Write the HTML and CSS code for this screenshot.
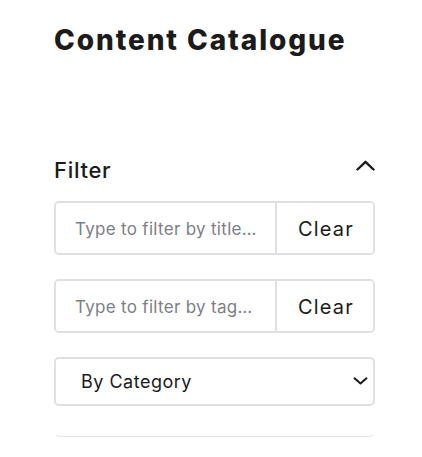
FILE: index.html
```html
<!DOCTYPE html>
<html lang="en">
<head>
<meta charset="utf-8">
<title>Content Catalogue</title>
<link rel="stylesheet" href="styles.css">
</head>
<body>
<main class="page">
  <h1 class="title">Content Catalogue</h1>
  <section class="filter">
    <div class="filter-head">
      <h2 class="filter-title">Filter</h2>
      <button class="toggle" type="button" aria-label="Collapse filter">
        <svg width="19" height="11" viewBox="0 0 19 11"><path d="M1.5 9.5 L9.5 1.8 L17.5 9.5" fill="none" stroke="#1b1b1b" stroke-width="2.4" stroke-linecap="round" stroke-linejoin="round"/></svg>
      </button>
    </div>
    <div class="group">
      <input class="field" type="text" placeholder="Type to filter by title or description">
      <button class="clear" type="button">Clear</button>
    </div>
    <div class="group">
      <input class="field" type="text" placeholder="Type to filter by tags or keywords">
      <button class="clear" type="button">Clear</button>
    </div>
    <div class="select-wrap">
      <select class="select">
        <option>By Category</option>
      </select>
      <svg class="select-arrow" width="15" height="8" viewBox="0 0 15 8"><path d="M1.5 1.3 L7.5 6.5 L13.5 1.3" fill="none" stroke="#1b1b1b" stroke-width="2" stroke-linecap="round" stroke-linejoin="round"/></svg>
    </div>
    <div class="list-edge"></div>
  </section>
</main>
</body>
</html>
```

FILE: styles.css
```css
* { box-sizing: border-box; }
html, body { margin: 0; padding: 0; background: #fff; }
body { font-family: Inter, "Open Sans", "Liberation Sans", sans-serif; color: #1b1b1b; }

.page { width: 321px; margin-left: 54px; padding-top: 22px; }

.title {
  margin: 0;
  font-size: 28px;
  line-height: 36px;
  font-weight: 800;
  letter-spacing: 1.9px;
  color: #1b1b1b;
}

.filter { margin-top: 96px; }

.filter-head {
  display: flex;
  align-items: center;
  justify-content: space-between;
  height: 32px;
  margin-bottom: 15px;
}
.filter-title {
  margin: 0;
  font-size: 22px;
  font-weight: 500;
  line-height: 32px;
  letter-spacing: 0.7px;
}
.toggle {
  border: 0; background: none; padding: 0; margin-right: 0;
  display: flex; align-items: center; cursor: pointer;
  height: 32px; margin-top: -10px;
}

.group {
  display: flex;
  height: 54px;
  border: 2px solid #dfe0e4;
  border-radius: 5px;
  margin-bottom: 24px;
  overflow: hidden;
}
.field {
  flex: 1;
  min-width: 0;
  border: 0;
  outline: none;
  padding: 2px 16px 0 19px;
  font-family: inherit;
  font-size: 17px;
  letter-spacing: 0.3px;
  color: #1b1b1b;
  text-overflow: ellipsis;
  background: #fff;
}
.field::placeholder { color: #7b7f86; }
.clear {
  width: 98px;
  border: 0;
  border-left: 2px solid #dfe0e4;
  background: #fff;
  font-family: inherit;
  font-size: 20px;
  letter-spacing: 1.2px;
  color: #1b1b1b;
  padding: 2px 0 0 2px;
  cursor: pointer;
}

.select-wrap { position: relative; height: 49px; }
.select {
  width: 100%;
  height: 49px;
  appearance: none;
  -webkit-appearance: none;
  border: 2px solid #dfe0e4;
  border-radius: 5px;
  background: #fff;
  padding: 0 40px 0 25px;
  font-family: inherit;
  font-size: 18px;
  letter-spacing: 0.5px;
  color: #1b1b1b;
}
.select-arrow { position: absolute; right: 7px; top: 20px; pointer-events: none; }

.list-edge {
  margin-top: 25px;
  height: 6px;
  border-bottom: 1px solid #e4e4ea;
  border-left: 1px solid transparent;
  border-right: 1px solid transparent;
  border-radius: 0 0 6px 6px;
}
```
